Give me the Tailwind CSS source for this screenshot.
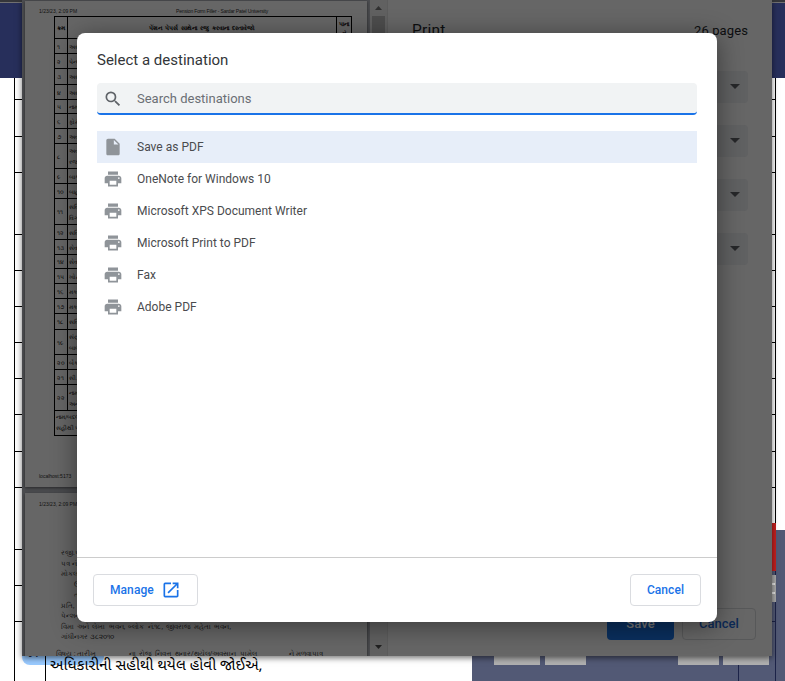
<!DOCTYPE html>
<html lang="en">
<head>
<meta charset="utf-8">
<title>Print</title>
<script src="https://cdn.jsdelivr.net/npm/@tailwindcss/browser@4"></script>
</head>
<body class="bg-white">
<div class="relative w-[785px] h-[681px] overflow-hidden font-['Roboto','Noto_Sans',sans-serif]">

  <!-- Page behind the print window -->
  <div class="absolute inset-0 flex flex-col">
    <div class="h-[3px] shrink-0 bg-[#35363a] border-b border-[#717171]"></div>
    <div class="h-[75px] shrink-0 bg-[#272f5b]"></div>
    <div class="flex grow justify-between">
      <div id="leftTicks" class="ml-[14px] w-3 border-l border-black"></div>
      <div id="rightTicks" class="mr-[9px] w-5 border-r border-black"></div>
    </div>
  </div>
  <div class="absolute left-[15px] top-[656px] w-[30px] h-[25px] bg-white"></div>
  <div class="absolute left-[472px] top-[530px] w-[313px] h-[151px] bg-[#525975]"></div>
  <div class="absolute left-[772px] top-[523px] w-1 h-[158px] flex flex-col">
    <div class="h-12 bg-[#c4201f]"></div>
    <div class="h-1 bg-[#525975] border-r border-[#1c2348]"></div>
    <div class="h-[27px] bg-[#a8a8a8] flex flex-col justify-center gap-[7px]"><i class="block h-0.5 w-[3px] bg-[#e5e5e5]"></i><i class="block h-0.5 w-[3px] bg-[#e5e5e5]"></i></div>
    <div class="h-5 border-b border-r border-[#1c2348] bg-[#525975]"></div>
    <div class="grow border-r border-[#1c2348] bg-[#525975]"></div>
  </div>
  <div class="absolute left-0 top-[656px] w-[785px] h-[25px]">
    <div class="absolute left-[22px] w-[82px] h-[9px] bg-[#99caff] rounded-b-lg"></div>
    <div class="absolute left-[25px] -top-[11px] text-[13px] leading-4 text-[#202c45]">૬૧</div>
    <div class="absolute left-[45px] w-px h-[25px] bg-black"></div>
    <div class="absolute left-[50px] top-0 w-[213px] text-[15.2px] leading-[20px] text-black whitespace-nowrap font-['Noto_Sans_Gujarati','Noto_Sans',sans-serif]">અધિકારીની સહીથી થયેલ હોવી જોઈએ,</div>
    <div class="absolute left-[494px] flex h-[9px]">
      <i class="w-[46px] bg-[#b0b0b0]"></i><i class="ml-[5px] w-[41px] bg-[#b0b0b0]"></i><i class="ml-[92px] w-[41px] bg-[#b0b0b0]"></i><i class="ml-1 w-[46px] bg-[#b0b0b0]"></i>
    </div>
    <div class="absolute left-[738px] top-[9px] w-px h-4 bg-[#1c2348]"></div>
  </div>

  <!-- Print window -->
  <div class="absolute left-[22px] top-0 w-[750px] h-[656px] bg-[#666] flex overflow-hidden shadow-[0_2px_6px_rgba(0,0,0,0.55)]">
    <div class="w-[348px] shrink-0 bg-[#4c4d50] pl-[3px] pt-px overflow-hidden">
      <div class="w-[342px] h-[486px] bg-[#666] shadow-[0_1px_3px_rgba(0,0,0,0.5)]">
        <div class="flex h-[15px] pt-[6px] pl-[14px] text-[5px] leading-[8px] text-[#111] font-['Liberation_Sans',sans-serif] whitespace-nowrap"><span class="w-[137px]">1/23/23, 2:09 PM</span><span class="tracking-[-.15px]">Pension Form Filler - Sardar Patel University</span></div>
        <div id="docTable" class="ml-[29px] w-[298px] border-t border-x border-black text-[6px] leading-[11px] text-black"></div>
        <div class="pl-[14px] pt-[36px] text-[5px] leading-[9px] text-[#111] font-['Liberation_Sans',sans-serif]">localhost:5173</div>
      </div>
      <div class="mt-[6px] w-[342px] h-[170px] bg-[#666] shadow-[0_1px_3px_rgba(0,0,0,0.5)] text-[7px] text-[#111]">
        <div class="h-[55px] pt-[7px] pl-[14px] text-[5px] leading-[8px] font-['Liberation_Sans',sans-serif]">1/23/23, 2:09 PM</div>
        <div class="pl-9 leading-[10.5px] whitespace-nowrap">
          <div>રજી.પી.એ.ડી.</div><div>પત્ર નં.</div><div>મોકલનાર</div><div class="pl-[13px]">ઉ</div><div class="pl-[13px]">ત</div><div>પ્રતિ,</div><div>પેન્શન</div><div class="[word-spacing:1.5px]">વિમા અને લેખા ભવન, બ્લોક નં.૧૮, જીવરાજ મહેતા ભવન,</div><div>ગાંધીનગર ૩૮૨૦૧૦</div>
        </div>
        <div class="flex pt-1.5 pl-[31px] leading-[10px] whitespace-nowrap"><span class="w-[73px]">વિષય : તારીખ</span><span class="w-[160px] [word-spacing:1.5px]">ના રોજ નિવૃત્ત થનાર/થયેલ/અવસાન પામેલ</span><span>ને મળવાપાત્ર</span></div>
      </div>
    </div>
    <div class="w-[18px] shrink-0 bg-[#616161] flex flex-col items-center justify-between pt-[6px] pb-[7px] border-r border-[#5c5c5c]">
      <div class="flex flex-col items-center gap-[6px]">
        <svg class="w-[7px] h-1" viewBox="0 0 7 4"><path d="M0 4 3.5 0 7 4Z" fill="#303030"/></svg>
        <div class="w-[13px] h-[30px] bg-[#4d4d4d]"></div>
      </div>
      <svg class="w-[7px] h-1" viewBox="0 0 7 4"><path d="M0 0 3.5 4 7 0Z" fill="#202020"/></svg>
    </div>
    <div class="grow pl-6 pr-6 flex flex-col">
      <div class="h-[71px] pt-5 flex justify-between text-[#0d0e10]"><span class="text-[15.5px] leading-[21px] tracking-[.2px]">Print</span><span class="text-[13px] leading-[21px] tracking-[.1px]">26 pages</span></div>
      <div class="flex flex-col items-end gap-[22px]">
        <div class="w-[180px] h-8 rounded bg-[#606162] flex items-center justify-end pr-2 pb-[1px]"><svg class="w-[10px] h-[5px]" viewBox="0 0 10 5"><path d="M0 0H10L5 5Z" fill="#262729"/></svg></div>
        <div class="w-[180px] h-8 rounded bg-[#606162] flex items-center justify-end pr-2 pb-[1px]"><svg class="w-[10px] h-[5px]" viewBox="0 0 10 5"><path d="M0 0H10L5 5Z" fill="#262729"/></svg></div>
        <div class="w-[180px] h-8 rounded bg-[#606162] flex items-center justify-end pr-2 pb-[1px]"><svg class="w-[10px] h-[5px]" viewBox="0 0 10 5"><path d="M0 0H10L5 5Z" fill="#262729"/></svg></div>
        <div class="w-[180px] h-8 rounded bg-[#606162] flex items-center justify-end pr-2 pb-[1px]"><svg class="w-[10px] h-[5px]" viewBox="0 0 10 5"><path d="M0 0H10L5 5Z" fill="#262729"/></svg></div>
      </div>
      <div class="mt-auto mb-4 -mr-2 flex justify-end gap-2 text-[13px] font-medium text-center">
        <div class="w-[67px] h-8 rounded bg-[#0a2f5e] text-[#777] leading-8 tracking-[.1px]">Save</div>
        <div class="w-[74px] h-8 rounded border border-[#575859] text-[#0c2a56] leading-[30px]">Cancel</div>
      </div>
    </div>
  </div>

  <!-- Destination dialog -->
  <div class="absolute left-[77px] top-[33px] w-[640px] h-[589px] rounded-lg bg-white shadow-[0_4px_26px_rgba(0,0,0,0.45)] flex flex-col">
    <div class="px-5 grow">
      <h1 class="pt-[17px] h-[50px] text-[15px] leading-5 text-[#333639]"><span>Select a destination</span></h1>
      <div class="h-8 rounded bg-[#f1f3f4] border-b-2 border-[#1a73e8] flex items-center">
        <svg class="ml-[6px] mt-px w-5 h-5" viewBox="0 0 24 24" fill="#5f6368"><path d="M15.5 14h-.79l-.28-.27A6.47 6.47 0 0 0 16 9.500 6.500 6.500 0 1 0 9.500 16c1.610 0 3.090-.59 4.230-1.570l.27.28v.79l5 4.990L20.490 19l-4.990-5zm-6 0C7.010 14 5 11.990 5 9.500S7.010 5 9.500 5 14 7.010 14 9.500 11.990 14 9.500 14z"/></svg>
        <span class="ml-[14px] pt-[2px] text-[13px] text-[#6b6f74]">Search destinations</span>
      </div>
      <ul id="list" class="mt-4 text-[12px] text-[#4a4b4e]"></ul>
    </div>
    <div class="h-[65px] shrink-0 border-t border-[#ccc] px-4 pt-4 flex justify-between text-[12px] font-medium text-[#1a73e8]">
      <div class="w-[105px] h-8 rounded border border-[#dadce0] flex items-center pl-4"><span class="w-[44px] tracking-[.08px]">Manage</span>
        <svg class="ml-[7px] w-5 h-5" viewBox="0 0 24 24" fill="#1a73e8"><path d="M19 19H5V5h7V3H5a2 2 0 0 0-2 2v14a2 2 0 0 0 2 2h14c1.100 0 2-.9 2-2v-7h-2v7zM14 3v2h3.590l-9.830 9.830 1.410 1.410L19 6.410V10h2V3h-7z"/></svg>
      </div>
      <div class="w-[71px] h-8 rounded border border-[#dadce0] flex items-center justify-center"><span class="tracking-[.05px]">Cancel</span></div>
    </div>
  </div>
</div>

<script>
  const docIcon = '<svg class="w-5 h-5" viewBox="0 0 24 24" fill="#8f9499"><path d="M6 2c-1.100 0-2 .9-2 2v16c0 1.100.9 2 2 2h12c1.100 0 2-.9 2-2V8l-6-6H6zm7 7V3.500L18.500 9H13z"/></svg>';
  const printIcon = '<svg class="w-5 h-5" viewBox="0 0 24 24" fill="#8f9499"><path d="M19 8H5c-1.660 0-3 1.340-3 3v6h4v4h12v-4h4v-6c0-1.660-1.340-3-3-3zm-3 11H8v-5h8v5zm3-7c-.55 0-1-.45-1-1s.45-1 1-1 1 .45 1 1-.45 1-1 1zm-1-9H6v4h12V3z"/></svg>';
  document.getElementById('list').innerHTML = ['Save as PDF', 'OneNote for Windows 10', 'Microsoft XPS Document Writer', 'Microsoft Print to PDF', 'Fax', 'Adobe PDF'].map((name, i) =>
    `<li class="h-8 flex items-center pl-[6px] gap-[14px] ${i ? '' : 'bg-[#e7eef9]'}">${i ? printIcon : docIcon}<span class="tracking-[.01px]">${name}</span></li>`).join('');

  const ticks = [99, 136, 172, 234, 270, 306, 342, 378, 414, 451, 487, 549, 585, 621];
  const tickRows = ticks.map((y, i) => `<div class="border-b border-black" style="height:${i ? y - ticks[i - 1] : y - 77}px"></div>`).join('');
  document.getElementById('leftTicks').innerHTML = tickRows;
  document.getElementById('rightTicks').innerHTML = tickRows;

  const rows = [[15,'૧','અરજી'],[15,'૨','પેન્શન'],[16,'૩','અરજ'],[15,'૪','અરજ'],[14,'૫','નામ'],[15,'૬','ફોર્મ'],[15,'૭','અવસ'],[25,'૮','અવસ<br>રજા'],[15,'૯','બાક'],[15,'૧૦','બાહ'],[26,'૧૧','સર્વિ<br>વિગ'],[15,'૧૨','સર્વિ'],[15,'૧૩','સેવા'],[14,'૧૪','સેવા'],[15,'૧૫','ખોટ'],[15,'૧૬','મકા'],[15,'૧૭','મકા'],[16,'૧૮','સર્વિ'],[25,'૧૯','સંયુ<br>બાબ'],[15,'૨૦','બેંક'],[15,'૨૧','સી.'],[26,'૨૨','નામ<br>અને']];
  document.getElementById('docTable').innerHTML =
    '<div class="flex h-[22px] border-b border-black font-bold"><div class="w-[13px] shrink-0 border-r border-black pl-0.5 leading-[22px]">ક્રમ</div><div class="grow text-center leading-[22px] [word-spacing:1.5px]">પેંશન પેપર્સ સાથેના રજુ કરવાના દસ્તાવેજો</div><div class="w-[15px] shrink-0 border-l border-black text-center leading-[9px] pt-0.5">પાના<br>નં</div></div>' +
    rows.map(([h, n, t]) => `<div class="flex border-b border-black overflow-hidden items-center" style="height:${h}px"><div class="w-[13px] shrink-0 h-full border-r border-black pl-0.5 flex items-center">${n}</div><div class="pl-px">${t}</div></div>`).join('') +
    '<div class="h-[25px] border-b border-black pl-px">નામ/બદલી<br>સહીથી પત્ર</div>';
</script>
</body>
</html>
